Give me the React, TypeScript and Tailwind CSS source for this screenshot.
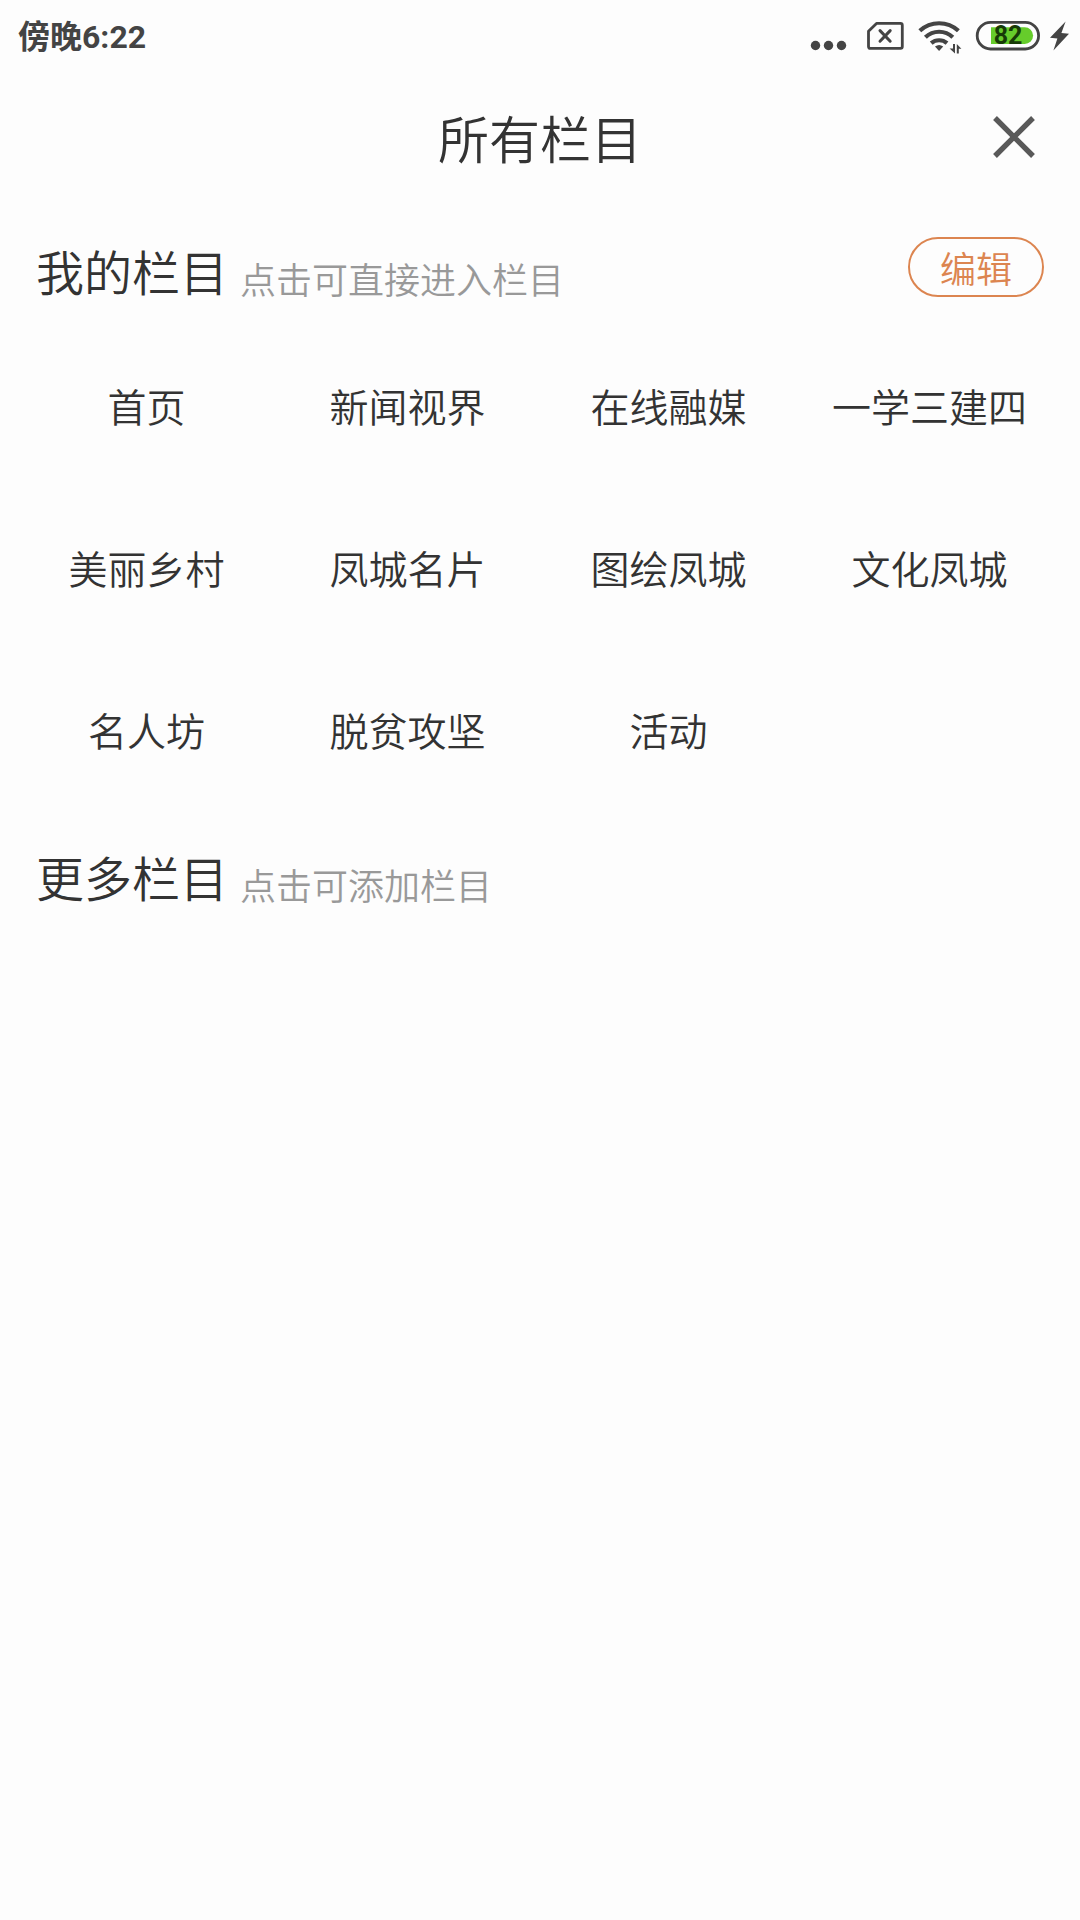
import { useState } from 'react';

const myColumns = [
    '首页',
    '新闻视界',
    '在线融媒',
    '一学三建四',
    '美丽乡村',
    '凤城名片',
    '图绘凤城',
    '文化凤城',
    '名人坊',
    '脱贫攻坚',
    '活动',
];

function StatusBar() {
    return (
        <div className="h-18 pl-[18px] pr-[10px] flex items-center justify-between text-[#444444]">
            <span className="pt-0.5 font-[Roboto,'Noto_Sans_CJK_SC',sans-serif] text-[32px] leading-9 font-bold">傍晚6:22</span>

            <div className="flex items-center gap-2">
                <svg className="w-12 h-9" viewBox="0 0 48 36" fill="currentColor" aria-hidden="true">
                    <circle cx="5.5" cy="27.5" r="4.7" />
                    <circle cx="18.5" cy="27.5" r="4.7" />
                    <circle cx="31.5" cy="27.5" r="4.7" />
                </svg>

                {/* No SIM */}
                <svg className="w-11 h-9" viewBox="0 0 44 36" fill="none" stroke="currentColor" strokeWidth="2.8" aria-hidden="true">
                    <path d="M10.5 5.4H34.5Q36.3 5.4 36.3 7.2V28.6Q36.3 30.4 34.5 30.4H4.3Q2.5 30.4 2.5 28.6V13.2Z" strokeLinejoin="round" />
                    <path d="M14 12.6L24.2 23.2M24.2 12.6L14 23.2" strokeWidth="3" strokeLinecap="round" />
                </svg>

                {/* Wifi with the traffic arrows */}
                <svg className="w-12 h-9" viewBox="0 0 48 36" fill="none" stroke="currentColor" strokeWidth="4.2" aria-hidden="true">
                    <path d="M1.8 12.8A28.5 28.5 0 0 1 40.4 12.8" />
                    <path d="M7.4 19.2A20 20 0 0 1 34.8 19.2" />
                    <path d="M13.2 25.2A12 12 0 0 1 29 25.2" />
                    <path d="M21.1 33L17 28.6Q21.1 25.6 25.2 28.6Z" fill="currentColor" stroke="none" />
                    <path d="M35 26H37V35.4L31.6 30.6H35ZM38.8 35.4H40.8V30.8H43.4L38.8 26Z" fill="currentColor" stroke="none" />
                </svg>

                <div className="grid place-items-center">
                    <svg className="col-start-1 row-start-1 w-17 h-9" viewBox="0 0 68 36" fill="none" aria-hidden="true">
                        <rect x="3.2" y="4.4" width="61.4" height="26.6" rx="13.3" stroke="currentColor" strokeWidth="2.8" />
                        <path d="M17 9.2H50.7A8.4 8.4 0 0 1 50.7 26H17Z" fill="#66cc2b" />
                    </svg>
                    <span className="col-start-1 row-start-1 font-[Roboto,sans-serif] text-[25px] leading-9 font-bold text-[#173a07]">82</span>
                </div>

                <svg className="w-5 h-9" viewBox="0 0 20 36" fill="currentColor" aria-hidden="true">
                    <path d="M15.6 3.4L0 19.8L7.4 20.6L3.4 32.4L19 15.8L11.4 15Z" />
                </svg>
            </div>
        </div>
    );
}

function SectionTitle({ title, hint }: { title: string; hint: string }) {
    return (
        <div className="pb-1.5 flex items-end gap-3">
            <h2 className="text-[48px] leading-16">{title}</h2>
            <p className="text-[36px] leading-12 text-[#999999]">{hint}</p>
        </div>
    );
}

export default function App() {
    const [editing, setEditing] = useState(false);

    return (
        <div className="min-h-screen bg-[#fdfdfd] text-[#333333] font-['Noto_Sans_CJK_SC',sans-serif] font-[350]">
            <StatusBar />

            <header className="h-[130px] px-10 grid grid-cols-[1fr_auto_1fr] items-center">
                <h1 className="col-start-2 text-[51px] leading-16 font-[350]">所有栏目</h1>
                <button type="button" aria-label="关闭" className="justify-self-end p-1">
                    <svg className="w-11 h-11 text-[#595959]" viewBox="0 0 44 44" fill="none" stroke="currentColor" strokeWidth="5.4" aria-hidden="true">
                        <path d="M3 3L41 41M41 3L3 41" />
                    </svg>
                </button>
            </header>

            <main className="pt-4">
                <section>
                    <div className="h-[110px] px-9 flex items-center justify-between">
                        <SectionTitle title="我的栏目" hint="点击可直接进入栏目" />
                        <button
                            type="button"
                            aria-pressed={editing}
                            onClick={() => setEditing(!editing)}
                            className="mb-3 px-[30px] py-1 border-2 border-[#dc8550] rounded-full text-[36px] leading-12 text-[#dc8550]"
                        >
                            编辑
                        </button>
                    </div>

                    <div className="pl-4 pr-5 grid grid-cols-4">
                        {myColumns.map((name) => (
                            <button key={name} type="button" className="h-[162px] pb-2 text-[39px] leading-12 whitespace-nowrap">
                                {name}
                            </button>
                        ))}
                    </div>
                </section>

                <section className="pt-2.5">
                    <div className="h-[110px] px-9 flex items-center">
                        <SectionTitle title="更多栏目" hint="点击可添加栏目" />
                    </div>
                </section>
            </main>
        </div>
    );
}
